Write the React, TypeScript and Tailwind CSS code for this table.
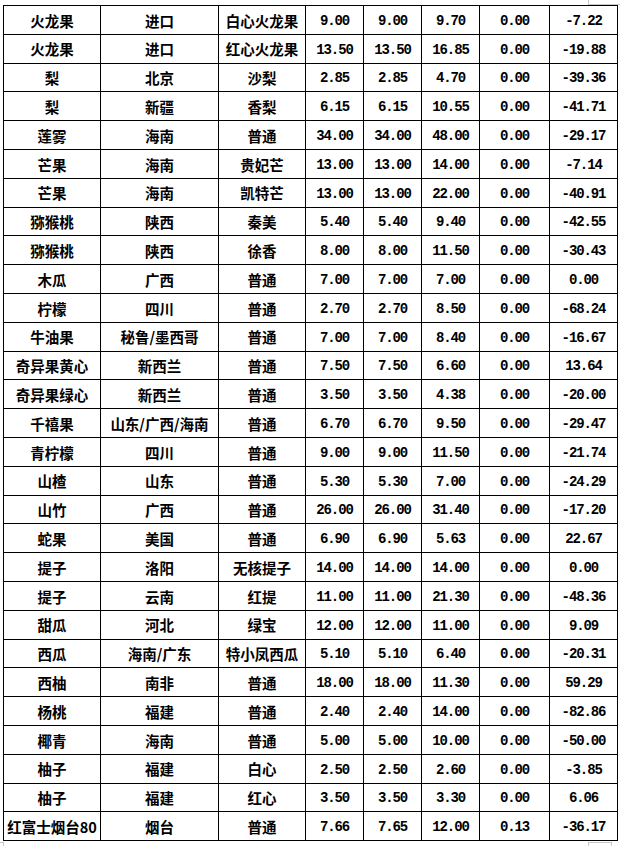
const rows: string[][] = [
  ["火龙果", "进口", "白心火龙果", "9.00", "9.00", "9.70", "0.00", "-7.22"],
  ["火龙果", "进口", "红心火龙果", "13.50", "13.50", "16.85", "0.00", "-19.88"],
  ["梨", "北京", "沙梨", "2.85", "2.85", "4.70", "0.00", "-39.36"],
  ["梨", "新疆", "香梨", "6.15", "6.15", "10.55", "0.00", "-41.71"],
  ["莲雾", "海南", "普通", "34.00", "34.00", "48.00", "0.00", "-29.17"],
  ["芒果", "海南", "贵妃芒", "13.00", "13.00", "14.00", "0.00", "-7.14"],
  ["芒果", "海南", "凯特芒", "13.00", "13.00", "22.00", "0.00", "-40.91"],
  ["猕猴桃", "陕西", "秦美", "5.40", "5.40", "9.40", "0.00", "-42.55"],
  ["猕猴桃", "陕西", "徐香", "8.00", "8.00", "11.50", "0.00", "-30.43"],
  ["木瓜", "广西", "普通", "7.00", "7.00", "7.00", "0.00", "0.00"],
  ["柠檬", "四川", "普通", "2.70", "2.70", "8.50", "0.00", "-68.24"],
  ["牛油果", "秘鲁/墨西哥", "普通", "7.00", "7.00", "8.40", "0.00", "-16.67"],
  ["奇异果黄心", "新西兰", "普通", "7.50", "7.50", "6.60", "0.00", "13.64"],
  ["奇异果绿心", "新西兰", "普通", "3.50", "3.50", "4.38", "0.00", "-20.00"],
  ["千禧果", "山东/广西/海南", "普通", "6.70", "6.70", "9.50", "0.00", "-29.47"],
  ["青柠檬", "四川", "普通", "9.00", "9.00", "11.50", "0.00", "-21.74"],
  ["山楂", "山东", "普通", "5.30", "5.30", "7.00", "0.00", "-24.29"],
  ["山竹", "广西", "普通", "26.00", "26.00", "31.40", "0.00", "-17.20"],
  ["蛇果", "美国", "普通", "6.90", "6.90", "5.63", "0.00", "22.67"],
  ["提子", "洛阳", "无核提子", "14.00", "14.00", "14.00", "0.00", "0.00"],
  ["提子", "云南", "红提", "11.00", "11.00", "21.30", "0.00", "-48.36"],
  ["甜瓜", "河北", "绿宝", "12.00", "12.00", "11.00", "0.00", "9.09"],
  ["西瓜", "海南/广东", "特小凤西瓜", "5.10", "5.10", "6.40", "0.00", "-20.31"],
  ["西柚", "南非", "普通", "18.00", "18.00", "11.30", "0.00", "59.29"],
  ["杨桃", "福建", "普通", "2.40", "2.40", "14.00", "0.00", "-82.86"],
  ["椰青", "海南", "普通", "5.00", "5.00", "10.00", "0.00", "-50.00"],
  ["柚子", "福建", "白心", "2.50", "2.50", "2.60", "0.00", "-3.85"],
  ["柚子", "福建", "红心", "3.50", "3.50", "3.30", "0.00", "6.06"],
  ["红富士烟台80", "烟台", "普通", "7.66", "7.65", "12.00", "0.13", "-36.17"],
];

// widths include each cell's right border
const widths = ["w-[97px]", "w-[118px]", "w-[87px]", "w-[58px]", "w-[58px]", "w-[58px]", "w-[70px]", "w-[68px]"];

const cjk = "font-['Noto_Sans_CJK_SC',sans-serif] text-[14.5px] font-bold";
const num = "font-['Liberation_Mono','Noto_Sans_CJK_SC',monospace] text-[14px] tracking-[-1.1px] font-bold";

export default function App() {
  return (
    <div className="relative h-[846px] w-[620px] overflow-hidden bg-white text-black">
      {/* word table corner marks */}
      <span className="absolute left-[588px] top-0 h-[5px] w-[32px] border-l border-b border-[#c8c8c8]" />
      <span className="absolute left-0 top-[842px] h-[4px] w-[4px] border-t border-r border-[#c8c8c8]" />
      <span className="absolute left-[588px] top-[842px] h-[4px] w-[24px] border-t border-l border-r border-[#c8c8c8]" />

      <div className="ml-[3px] mt-[5px] w-[615px] border-l border-t border-black">
        {rows.map((r, i) => (
          <div key={i} className="flex h-[28.8px]">
            {r.map((c, j) => (
              <div
                key={j}
                className={`${widths[j]} flex shrink-0 items-center justify-center whitespace-nowrap border-r border-b border-black pt-[2px] leading-none ${j < 3 ? cjk : num}`}
              >
                {c}
              </div>
            ))}
          </div>
        ))}
      </div>
    </div>
  );
}
